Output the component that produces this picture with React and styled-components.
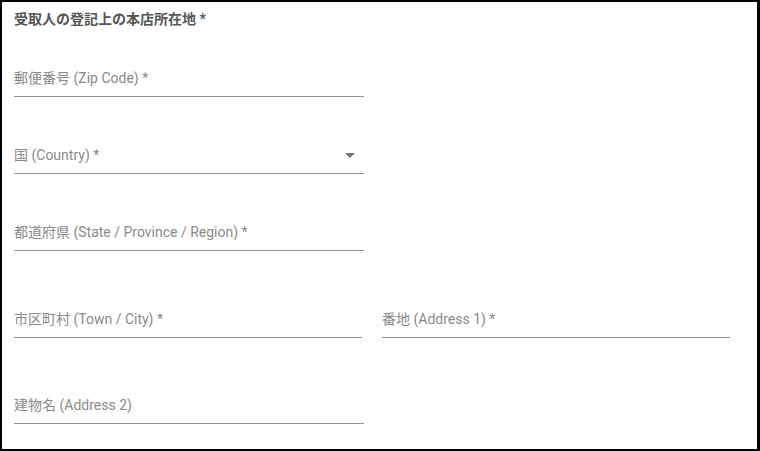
import React from "react";
import styled, { createGlobalStyle } from "styled-components";

const Global = createGlobalStyle`
  html, body { margin: 0; padding: 0; background: #fff; }
  body { font-family: Roboto, "Noto Sans CJK JP", "Noto Sans", sans-serif; }
  * { box-sizing: border-box; }
`;

const Frame = styled.div`
  width: 760px;
  height: 451px;
  border-style: solid;
  border-color: #000;
  border-width: 2px 3px 2px 2px;
  padding: 7px 12px 0 12px;
  display: flex;
  flex-direction: column;
`;

const Title = styled.div`
  font-size: 14px;
  line-height: 20px;
  font-weight: 700;
  color: #555;
  margin-bottom: 39px;
`;

const Row = styled.div`
  display: flex;
  gap: 20px;
  margin-bottom: ${(p) => p.$after}px;
`;

const Field = styled.div`
  position: relative;
  width: ${(p) => p.$w}px;
  padding-bottom: 8px;
  border-bottom: 1px solid rgba(0, 0, 0, 0.42);
  font-size: 14px;
  line-height: 20px;
  color: #8a8a8a;
  white-space: nowrap;
`;

const Arrow = styled.svg`
  position: absolute;
  right: 2px;
  top: -2px;
  width: 24px;
  height: 24px;
  fill: rgba(0, 0, 0, 0.54);
`;

export default function App() {
  return (
    <>
      <Global />
      <Frame>
        <Title>受取人の登記上の本店所在地 *</Title>
        <Row $after={48}>
          <Field $w={350}>郵便番号 (Zip Code) *</Field>
        </Row>
        <Row $after={48}>
          <Field $w={350}>
            国 (Country) *
            <Arrow viewBox="0 0 24 24">
              <path d="M7 10l5 5 5-5z" />
            </Arrow>
          </Field>
        </Row>
        <Row $after={58}>
          <Field $w={350}>都道府県 (State / Province / Region) *</Field>
        </Row>
        <Row $after={57}>
          <Field $w={348}>市区町村 (Town / City) *</Field>
          <Field $w={348}>番地 (Address 1) *</Field>
        </Row>
        <Row $after={0}>
          <Field $w={350}>建物名 (Address 2)</Field>
        </Row>
      </Frame>
    </>
  );
}
